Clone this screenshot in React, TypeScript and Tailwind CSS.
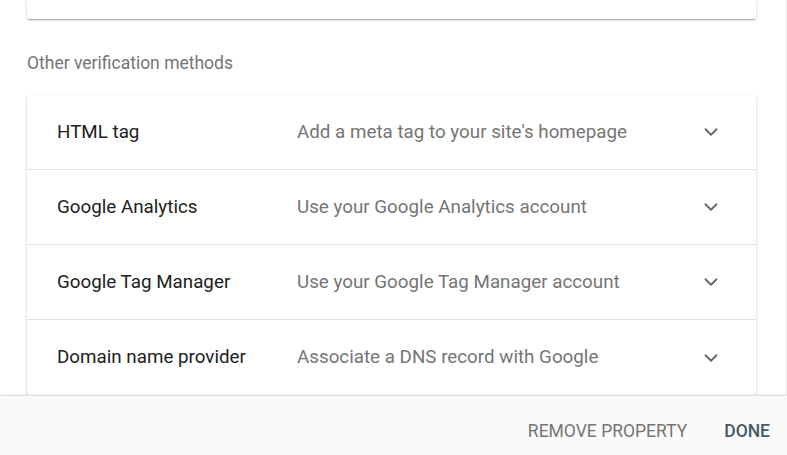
import React from 'react';
import { ChevronDown } from 'lucide-react';

const methods = [
  { name: 'HTML tag', desc: "Add a meta tag to your site's homepage" },
  { name: 'Google Analytics', desc: 'Use your Google Analytics account' },
  { name: 'Google Tag Manager', desc: 'Use your Google Tag Manager account' },
  { name: 'Domain name provider', desc: 'Associate a DNS record with Google' },
];

const cardShadow =
  'shadow-[0_1px_3px_rgba(0,0,0,0.2),0_1px_1px_rgba(0,0,0,0.14),0_2px_1px_-1px_rgba(0,0,0,0.12)]';

const App = () => {
  return (
    <div
      className="h-[455px] w-[787px] overflow-hidden bg-white flex flex-col"
      style={{ fontFamily: 'Roboto, "Liberation Sans", sans-serif' }}
    >
      <div className="flex-1 overflow-hidden border-r border-[#ededed]">
        <div className="px-[27px] pr-[30px]">
          <div className={`h-[19px] bg-white rounded-b-[2px] ${cardShadow}`} />

          <div className="mt-[32px] text-[17.5px] leading-[24px] text-[#757575]">
            Other verification methods
          </div>

          <div className={`mt-[20px] bg-white rounded-[2px] ${cardShadow}`}>
            {methods.map((m, i) => (
              <div
                key={m.name}
                className={`h-[75px] flex items-center pl-[30px] pr-[34px] ${
                  i < methods.length - 1 ? 'border-b border-[#e0e0e0]' : ''
                }`}
              >
                <div className="w-[240px] text-[18.8px] text-[#212121]">{m.name}</div>
                <div className="flex-1 text-[18.8px] text-[#757575]">{m.desc}</div>
                <ChevronDown className="text-[#666666]" size={22} strokeWidth={2} />
              </div>
            ))}
          </div>
        </div>
      </div>

      <div className="h-[60px] shrink-0 bg-[#fafafa] border-t border-[#e0e0e0] shadow-[0_-1px_2px_rgba(0,0,0,0.06)] flex justify-end items-start pt-[17px] pr-[1px] gap-[5px]">
        <button className="h-9 px-4 text-[17.5px] uppercase text-[#757575]">Remove property</button>
        <button className="h-9 px-4 text-[17.5px] uppercase font-medium text-[#455a64]">Done</button>
      </div>
    </div>
  );
};

export default App;
